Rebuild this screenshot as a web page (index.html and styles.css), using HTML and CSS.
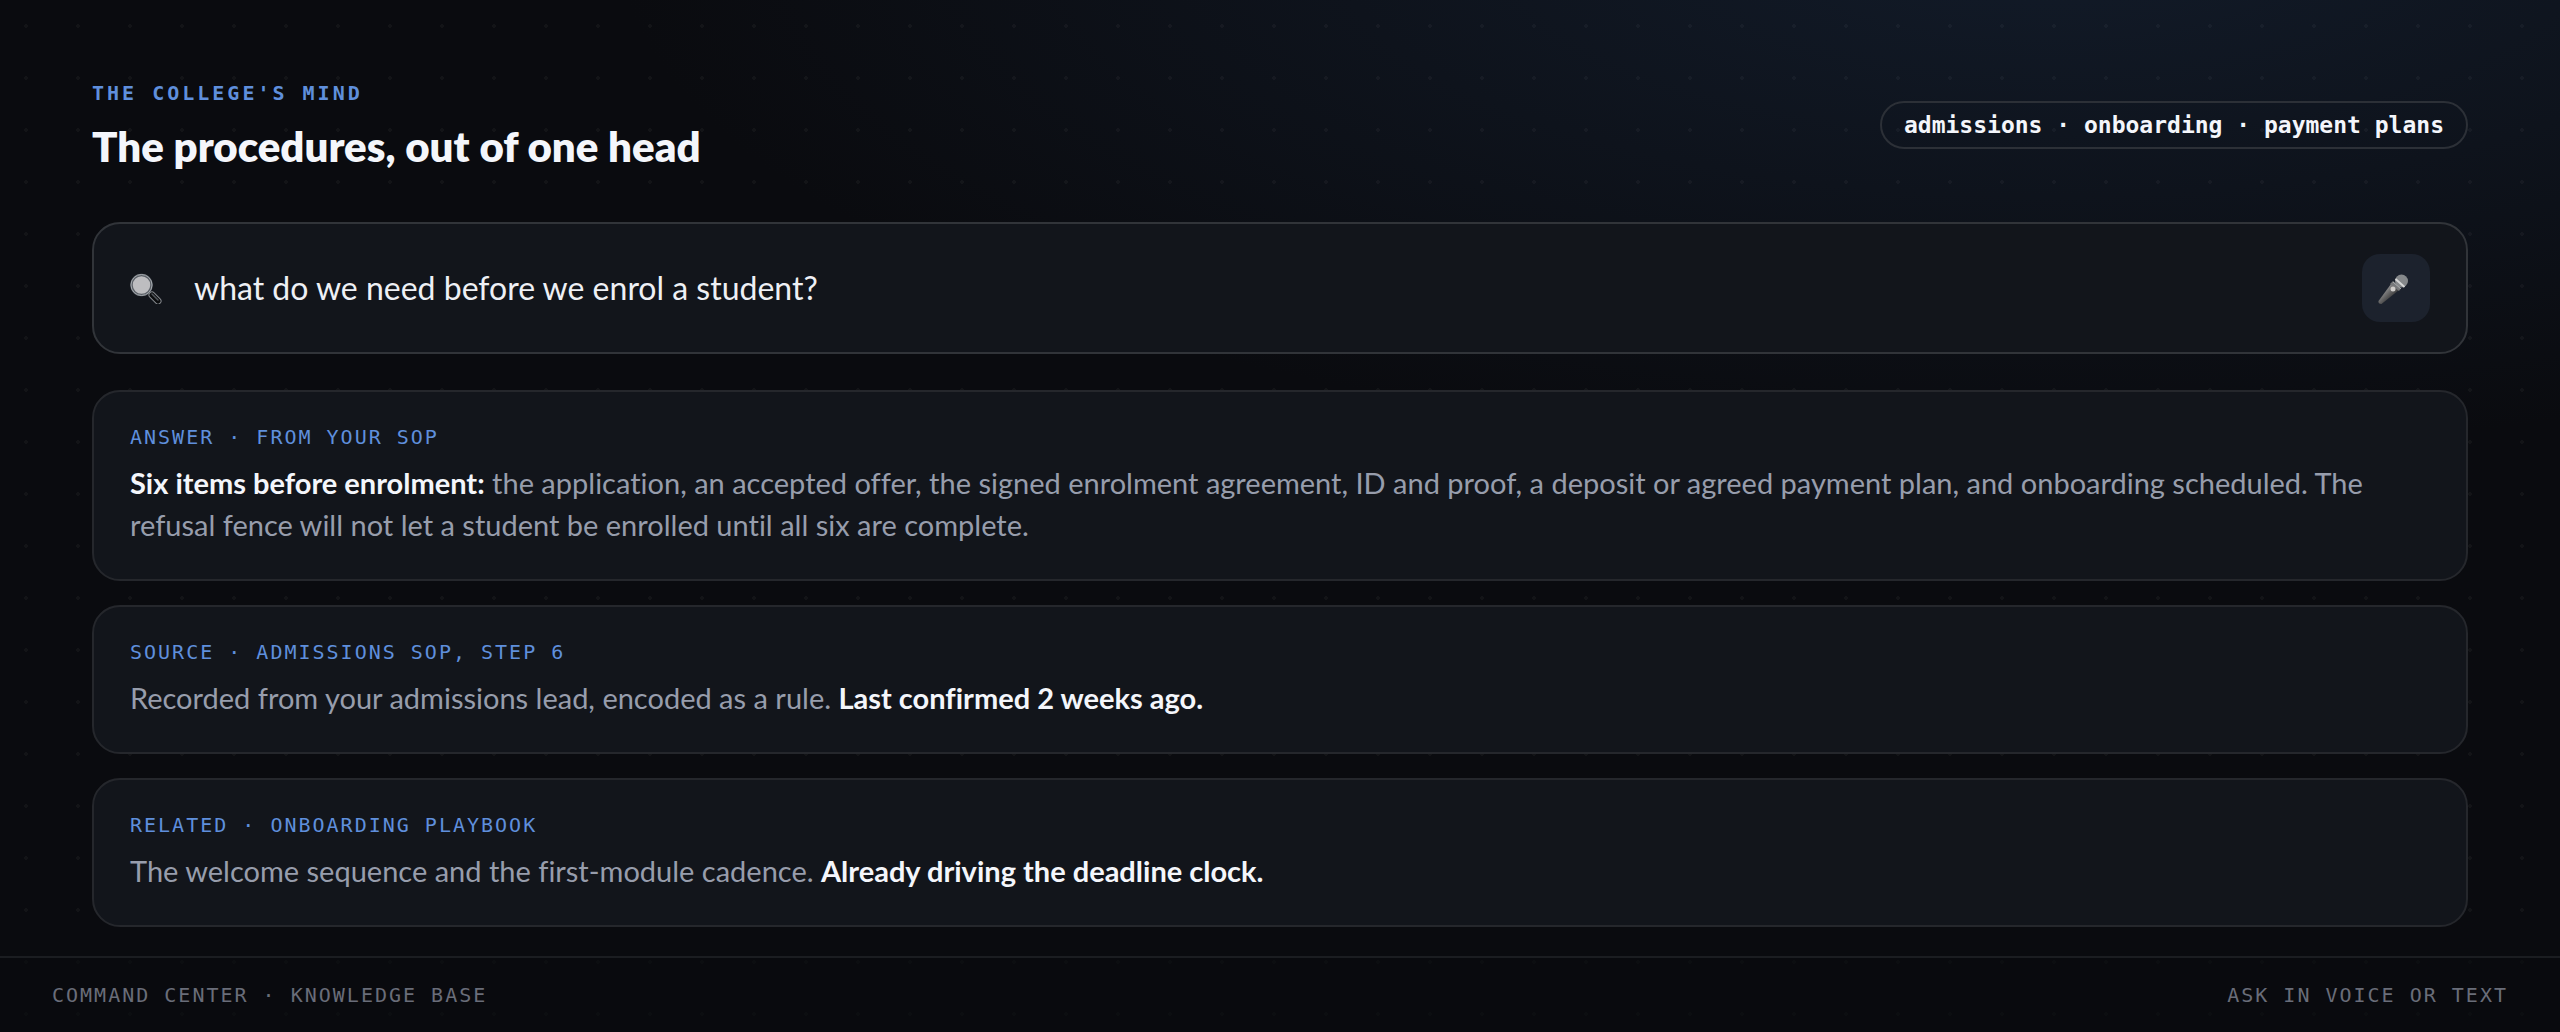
FILE: index.html
```html
<!DOCTYPE html>
<html lang="en">
	<head>
		<meta charset="utf-8">
		<title>Command Center - Knowledge Base</title>
		<meta name="viewport" content="width=device-width, initial-scale=1">
		<link rel="stylesheet" href="styles.css">
	</head>
	<body>
		<main class="content">
			<header class="top">
				<div>
					<p class="eyebrow">THE COLLEGE'S MIND</p>
					<h1>The procedures, out of one head</h1>
				</div>
				<span class="pill">admissions · onboarding · payment plans</span>
			</header>

			<form class="search">
				<svg class="search-icon" viewBox="0 0 32 32" aria-hidden="true">
					<path d="M18 19l3 3" stroke="#85888c" stroke-width="3"/>
					<path d="M22 23l6 6" stroke="#85898e" stroke-width="7" stroke-linecap="round"/>
					<path d="M22 23l6 6" stroke="#0b0c0e" stroke-width="5" stroke-linecap="round"/>
					<path d="M22 22l6 6" stroke="#50555b" stroke-width="1.500" stroke-linecap="round"/>
					<circle cx="11.500" cy="13" r="10" fill="#bdbdc0" stroke="#5b6067" stroke-width="2.500"/>
					<circle cx="11.500" cy="13" r="10.500" fill="none" stroke="#a4a9ae" stroke-width="1"/>
				</svg>
				<input type="text" id="question" aria-label="Ask a question" value="what do we need before we enrol a student?">
				<button type="button" class="mic" aria-label="Ask by voice">
					<svg viewBox="0 0 40 32" aria-hidden="true">
						<defs>
							<linearGradient id="body" x1="0" y1="0" x2="1" y2="1">
								<stop offset="0.3" stop-color="#8d8d8d"/>
								<stop offset="0.7" stop-color="#333333"/>
							</linearGradient>
						</defs>
						<path d="M15 12l8 6L5.500 32q-3.500 0-3-3z" fill="url(#body)"/>
						<path d="M17 9l8 7-2 3-9-7z" fill="#77797b"/>
						<circle cx="25.500" cy="9" r="6.500" fill="#85888a"/>
						<path d="M19.500 7l9 8" stroke="#d5d6d6" stroke-width="2"/>
						<path d="M17 10l8 7" stroke="#a9abac" stroke-width="1"/>
						<circle cx="17" cy="17" r="2.500" fill="#d0cecb"/>
					</svg>
				</button>
			</form>

			<div class="cards">
				<section class="card">
					<h2>ANSWER · FROM YOUR SOP</h2>
					<p><strong>Six items before enrolment:</strong> the application, an accepted offer, the signed enrolment agreement, ID and proof, a deposit or agreed payment plan, and onboarding scheduled. The refusal fence will not let a student be enrolled until all six are complete.</p>
				</section>
				<section class="card">
					<h2>SOURCE · ADMISSIONS SOP, STEP 6</h2>
					<p>Recorded from your admissions lead, encoded as a rule. <strong>Last confirmed 2 weeks ago.</strong></p>
				</section>
				<section class="card">
					<h2>RELATED · ONBOARDING PLAYBOOK</h2>
					<p>The welcome sequence and the first-module cadence. <strong>Already driving the deadline clock.</strong></p>
				</section>
			</div>
		</main>

		<footer class="bar">
			<span>COMMAND CENTER · KNOWLEDGE BASE</span>
			<span>ASK IN VOICE OR TEXT</span>
		</footer>
	</body>
</html>
```
FILE: styles.css
```css
*{
	box-sizing: border-box;
}

/*dot grid over a blue glow in the top right*/
body{
	margin: 0;
	min-height: 100vh;
	display: flex;
	flex-direction: column;
	color: #f4f6fb;
	font-family: Lato, "Open Sans", sans-serif;
	font-variant-ligatures: no-common-ligatures;
	background-color: #0a0b0f;
	background-image:
		radial-gradient(circle, rgba(255,255,255,0.035) 2px, transparent 2px),
		radial-gradient(ellipse 56% 50% at 80% -6%, #121b29, transparent);
	background-size: 52px 52px, 100% 100%;
	background-repeat: repeat, no-repeat;
}

h1, h2, p{
	margin: 0;
}

.content{
	flex: 1;
	padding: 80px 92px 26px;
}

.top{
	display: flex;
	justify-content: space-between;
	align-items: center;
	margin-bottom: 52px;
}

.eyebrow, .pill, .card h2, .bar{
	font-family: "DejaVu Sans Mono", monospace;
	font-size: 20px;
	line-height: 26px;
}

.eyebrow{
	color: #5f8fdc;
	font-weight: bold;
	letter-spacing: 3px;
	margin-bottom: 16px;
}

h1{
	font-size: 42px;
	line-height: 48px;
	font-weight: 800;
}

.pill{
	padding: 9px 22px;
	border: 2px solid #2c3037;
	border-radius: 24px;
	font-size: 23px;
	font-weight: bold;
}

.search{
	display: flex;
	align-items: center;
	gap: 32px;
	padding: 30px 36px;
	margin-bottom: 36px;
	background: #12151b;
	border: 2px solid #313439;
	border-radius: 28px;
}

.search-icon{
	width: 32px;
	height: 32px;
	flex: none;
}

.search input{
	flex: 1;
	min-width: 0;
	padding: 0;
	border: 0;
	outline: 0;
	background: none;
	color: #eef0f5;
	font-family: inherit;
	font-size: 32px;
	line-height: 40px;
}

.mic{
	display: flex;
	align-items: center;
	justify-content: center;
	width: 68px;
	height: 68px;
	padding: 0;
	border: 0;
	border-radius: 18px;
	background: #1c222d;
}

.mic svg{
	width: 40px;
	height: 32px;
}

.cards{
	display: flex;
	flex-direction: column;
	gap: 24px;
}

.card{
	padding: 32px 36px 33px;
	background: #12151b;
	border: 2px solid #25272c;
	border-radius: 28px;
}

.card h2{
	color: #5f8fdc;
	font-weight: normal;
	letter-spacing: 2px;
	margin-bottom: 12px;
}

.card p{
	color: #979dac;
	font-size: 29px;
	line-height: 42px;
}

.card strong{
	color: #f4f6fb;
}

.bar{
	display: flex;
	justify-content: space-between;
	padding: 24px 52px;
	color: #696d79;
	background: rgba(8,10,14,0.6);
	border-top: 2px solid #1b1d21;
	letter-spacing: 2px;
}
```
